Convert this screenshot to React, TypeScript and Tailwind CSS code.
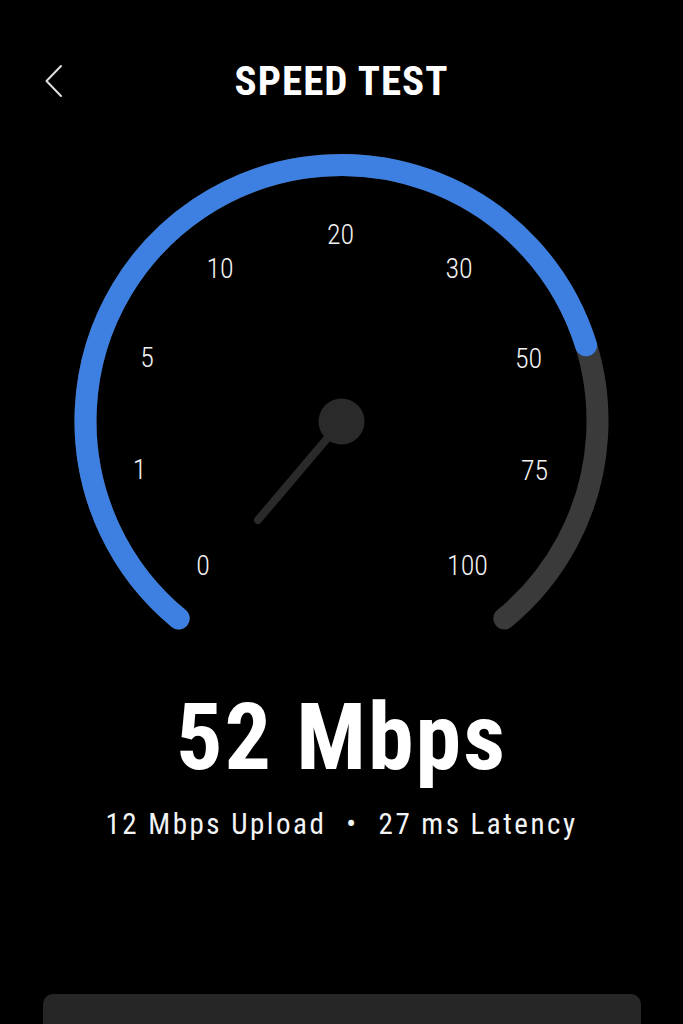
const CX = 341.5;
const CY = 316;
const R = 256;
const START = 129.5; // degrees, screen coords (y down)
const END = 410.5;
const BLUE_END = 342.8;

function pt(deg: number) {
  const a = (deg * Math.PI) / 180;
  return { x: CX + R * Math.cos(a), y: CY + R * Math.sin(a) };
}

function arc(from: number, to: number) {
  const a = pt(from);
  const b = pt(to);
  const large = to - from > 180 ? 1 : 0;
  return `M ${a.x} ${a.y} A ${R} ${R} 0 ${large} 1 ${b.x} ${b.y}`;
}

// tick labels, x is centre, y is baseline
const labels = [
  { t: '0', x: 203, y: 470 },
  { t: '1', x: 139.5, y: 374 },
  { t: '5', x: 147, y: 262 },
  { t: '10', x: 220, y: 173 },
  { t: '20', x: 340.5, y: 139 },
  { t: '30', x: 459, y: 173 },
  { t: '50', x: 528.5, y: 263 },
  { t: '75', x: 534.5, y: 375 },
  { t: '100', x: 467.5, y: 470 },
];

function Gauge() {
  return (
    <svg width={683} height={530} viewBox="0 0 683 530" className="block">
      <path d={arc(START, END)} fill="none" stroke="#3a3a3a" strokeWidth={22} strokeLinecap="round" />
      <path d={arc(START, BLUE_END)} fill="none" stroke="#3d80e1" strokeWidth={22} strokeLinecap="round" />
      {labels.map((l) => (
        <text
          key={l.t}
          x={l.x}
          y={l.y}
          textAnchor="middle"
          fill="#f2f2f2"
          fontSize={28}
          fontWeight={300}
          fontFamily='"Roboto Condensed", Roboto, sans-serif'
        >
          {l.t}
        </text>
      ))}
      <line x1={CX} y1={316.5} x2={258} y2={415} stroke="#2a2a2a" strokeWidth={8} strokeLinecap="round" />
      <circle cx={CX} cy={316.5} r={23} fill="#2a2a2a" />
    </svg>
  );
}

function BackIcon() {
  return (
    <svg width={18} height={34} viewBox="0 0 18 34" fill="none" className="block">
      <polyline points="16,2 1.5,17 16,32" stroke="#dedede" strokeWidth={2} strokeLinecap="round" strokeLinejoin="round" />
    </svg>
  );
}

export default function App() {
  return (
    <div
      className="h-[1024px] overflow-hidden bg-black text-white"
      style={{ fontFamily: '"Roboto Condensed", Roboto, sans-serif' }}
    >
      <header className="grid grid-cols-[1fr_auto_1fr] items-center pt-[57px]">
        <button className="pl-[45px] text-left">
          <BackIcon />
        </button>
        <h1 className="text-[41px] font-bold leading-[48px] tracking-[1px]">SPEED TEST</h1>
        <div />
      </header>

      <Gauge />

      <div className="mt-[57px] text-center text-[92px] font-bold leading-none tracking-[2px]">52 Mbps</div>
      <div className="mt-[26px] flex items-center justify-center gap-[20px] text-[29px] leading-none tracking-[2.5px] text-gray-100">
        <span>12 Mbps Upload</span>
        <span>•</span>
        <span>27 ms Latency</span>
      </div>

      <div className="mx-auto mt-[155px] h-24 w-[598px] rounded-[10px] bg-[#262626]" />
    </div>
  );
}
